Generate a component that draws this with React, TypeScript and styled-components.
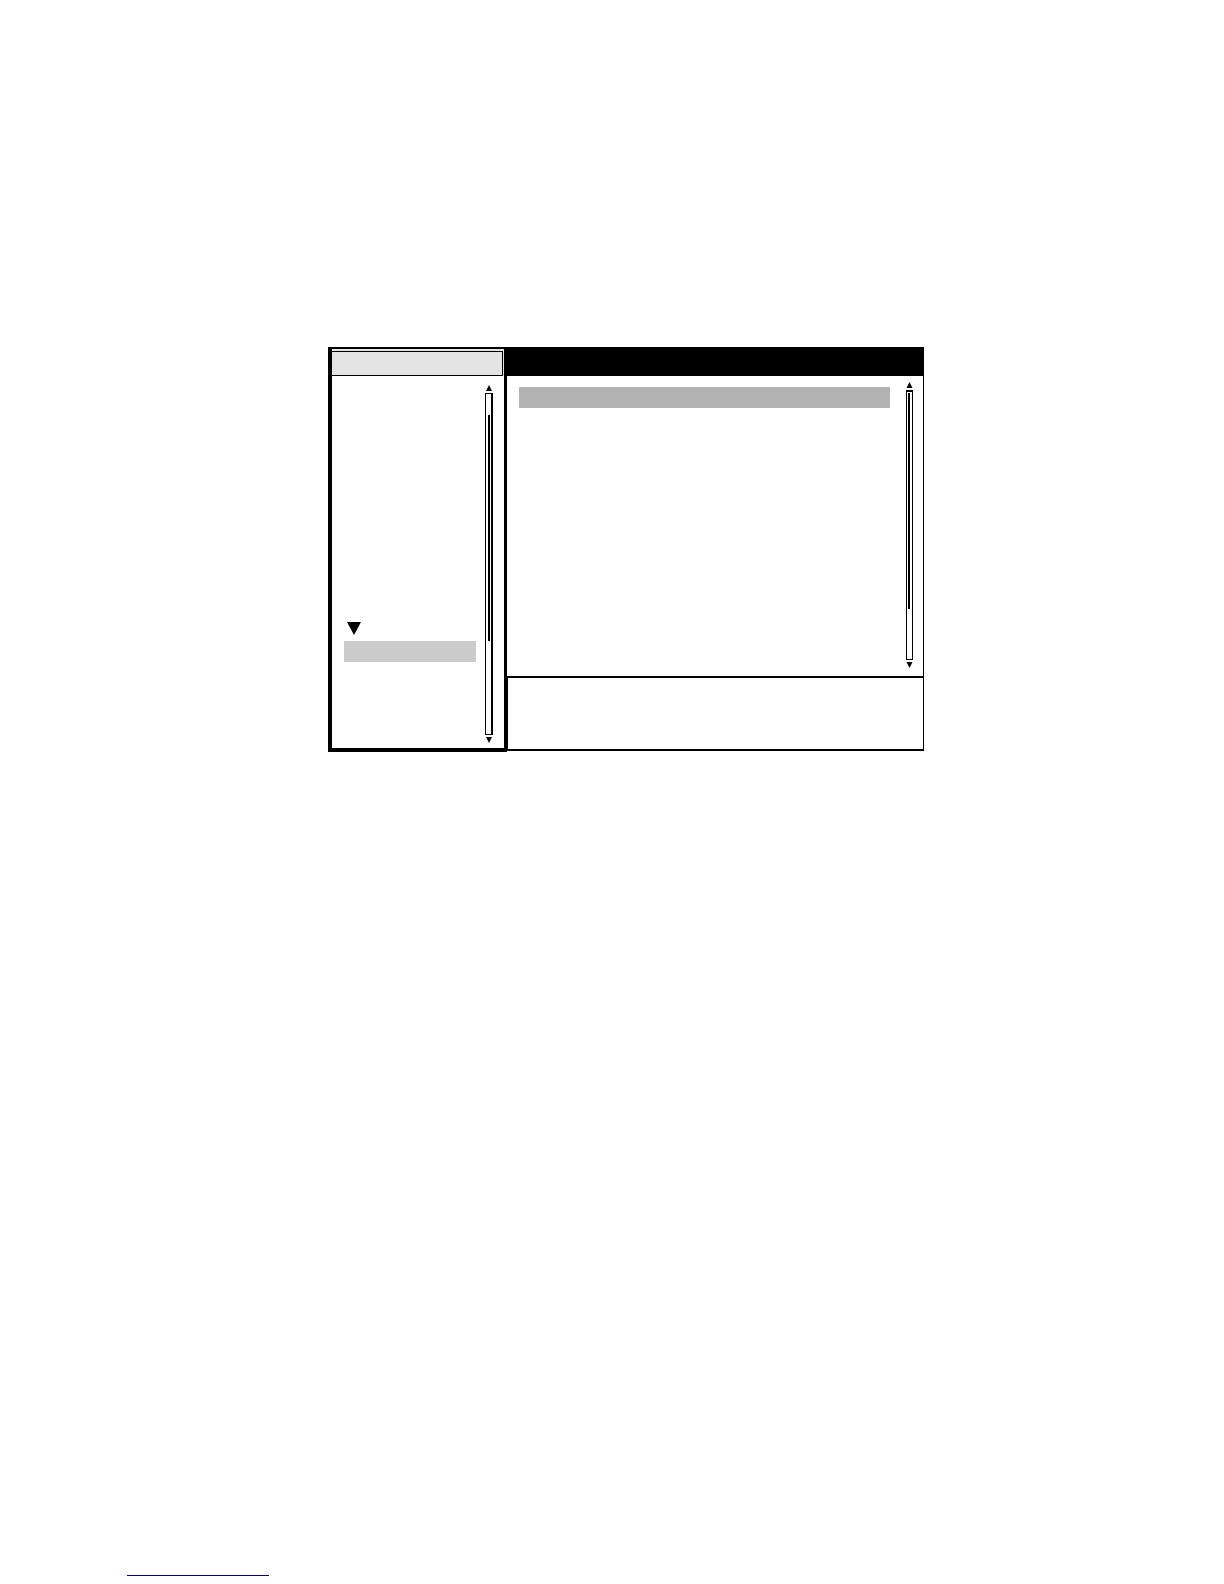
import React from "react";
import styled, { createGlobalStyle } from "styled-components";

const GlobalStyle = createGlobalStyle`
  *, *::before, *::after { box-sizing: border-box; }
  body {
    margin: 0;
    background: #fff;
    font-family: "Liberation Sans", Arial, sans-serif;
    font-size: 14px;
  }
`;

const Page = styled.div`
  min-height: 100vh;
  display: flex;
  flex-direction: column;
  justify-content: space-between;
`;

const Viewer = styled.main`
  display: grid;
  grid-template-columns: 179px minmax(0, 1fr);
  align-items: start;
  padding: 347px 300px 0 328px;
`;

const Sidebar = styled.nav`
  display: flex;
  flex-direction: column;
  border: solid #000;
  border-width: 2px 3px 4px 4px;
`;

const SidebarHeader = styled.header`
  padding: 2px 1px 0 0;
  background: #e3e3e3;
`;

const SidebarTitle = styled.div`
  height: 25px;
  border: solid #000;
  border-width: 1px 1px 1px 0;
`;

const SidebarBody = styled.div`
  display: flex;
  gap: 9px;
  padding: 0 11px 0 12px;
`;

const List = styled.ul<{ $top: number; $bottom: number }>`
  flex: 1;
  min-width: 0;
  margin: 0;
  padding: ${(p) => p.$top}px 0 ${(p) => p.$bottom}px;
  list-style: none;
`;

const Row = styled.li<{ $fill?: string }>`
  height: 21px;
  background: ${(p) => p.$fill ?? "transparent"};
`;

const Disclosure = styled.button`
  display: flex;
  align-items: flex-start;
  width: 100%;
  height: 21px;
  margin: 0;
  padding: 2px 3px;
  border: 0;
  background: transparent;
`;

const Content = styled.section`
  display: flex;
  flex-direction: column;
`;

const ContentHeader = styled.header`
  height: 29px;
  background: #000;
`;

const ContentBody = styled.div`
  display: flex;
  gap: 16px;
  padding: 0 10px 0 12px;
  border-right: 1px solid #000;
`;

const Description = styled.div`
  height: 75px;
  border: solid #000;
  border-width: 2px 1px 2px 1px;
`;

const Scroller = styled.div<{ $width: number; $top: number; $bottom: number }>`
  width: ${(p) => p.$width}px;
  display: flex;
  flex-direction: column;
  gap: 2px;
  padding: ${(p) => p.$top}px 0 ${(p) => p.$bottom}px;

  svg { display: block; flex: none; }
`;

const Track = styled.div<{ $border: string; $inset: string }>`
  flex: 1;
  border: solid #000;
  border-width: ${(p) => p.$border};
  padding: ${(p) => p.$inset};
`;

const Thumb = styled.div<{ $length: number }>`
  width: 2px;
  height: ${(p) => p.$length}px;
  background: #000;
`;

const Footer = styled.footer`
  padding: 0 127px 8px;
`;

const FooterLink = styled.a`
  display: block;
  width: 142px;
  height: 16px;
  border-bottom: 1px solid #000080;
`;

type ScrollBarProps = {
  width: number;
  top: number;
  bottom: number;
  border: string;
  inset: string;
  thumb: number;
};

function ScrollBar({ width, top, bottom, border, inset, thumb }: ScrollBarProps) {
  const mid = width / 2;
  return (
    <Scroller $width={width} $top={top} $bottom={bottom} aria-hidden="true">
      <svg width={width} height="6" viewBox={`0 0 ${width} 6`}>
        <path d={`M${mid} 0L${mid + 3} 6H${mid - 3}Z`} />
      </svg>
      <Track $border={border} $inset={inset}>
        <Thumb $length={thumb} />
      </Track>
      <svg width={width} height="6" viewBox={`0 0 ${width} 6`}>
        <path d={`M${mid - 3} 0H${mid + 3}L${mid} 6Z`} />
      </svg>
    </Scroller>
  );
}

const emptyRows = (count: number, prefix: string) =>
  Array.from({ length: count }, (_, i) => <Row key={`${prefix}${i}`} />);

export default function App() {
  return (
    <>
      <GlobalStyle />
      <Page>
        <Viewer>
          <Sidebar aria-label="Topics">
            <SidebarHeader>
              <SidebarTitle />
            </SidebarHeader>
            <SidebarBody>
              <List $top={13} $bottom={23}>
                {emptyRows(11, "before")}
                <Row>
                  <Disclosure type="button" aria-label="Collapse section" aria-expanded="true">
                    <svg width="14" height="13" viewBox="0 0 14 13">
                      <path d="M0 0H14L7 13Z" />
                    </svg>
                  </Disclosure>
                </Row>
                <Row $fill="#cbcbcb" />
                {emptyRows(3, "after")}
              </List>
              <ScrollBar
                width={8}
                top={9}
                bottom={5}
                border="1px 2px 1px 1px"
                inset="21px 0 0 2px"
                thumb={226}
              />
            </SidebarBody>
          </Sidebar>
          <Content aria-label="Details">
            <ContentHeader />
            <ContentBody>
              <List $top={11} $bottom={16}>
                <Row $fill="#b2b2b2" />
                {emptyRows(12, "item")}
              </List>
              <ScrollBar
                width={7}
                top={6}
                bottom={8}
                border="2px 1px 1px 1px"
                inset="1px 0 0 1px"
                thumb={216}
              />
            </ContentBody>
            <Description />
          </Content>
        </Viewer>
        <Footer>
          <FooterLink href="#top" aria-label="Back to top" />
        </Footer>
      </Page>
    </>
  );
}
